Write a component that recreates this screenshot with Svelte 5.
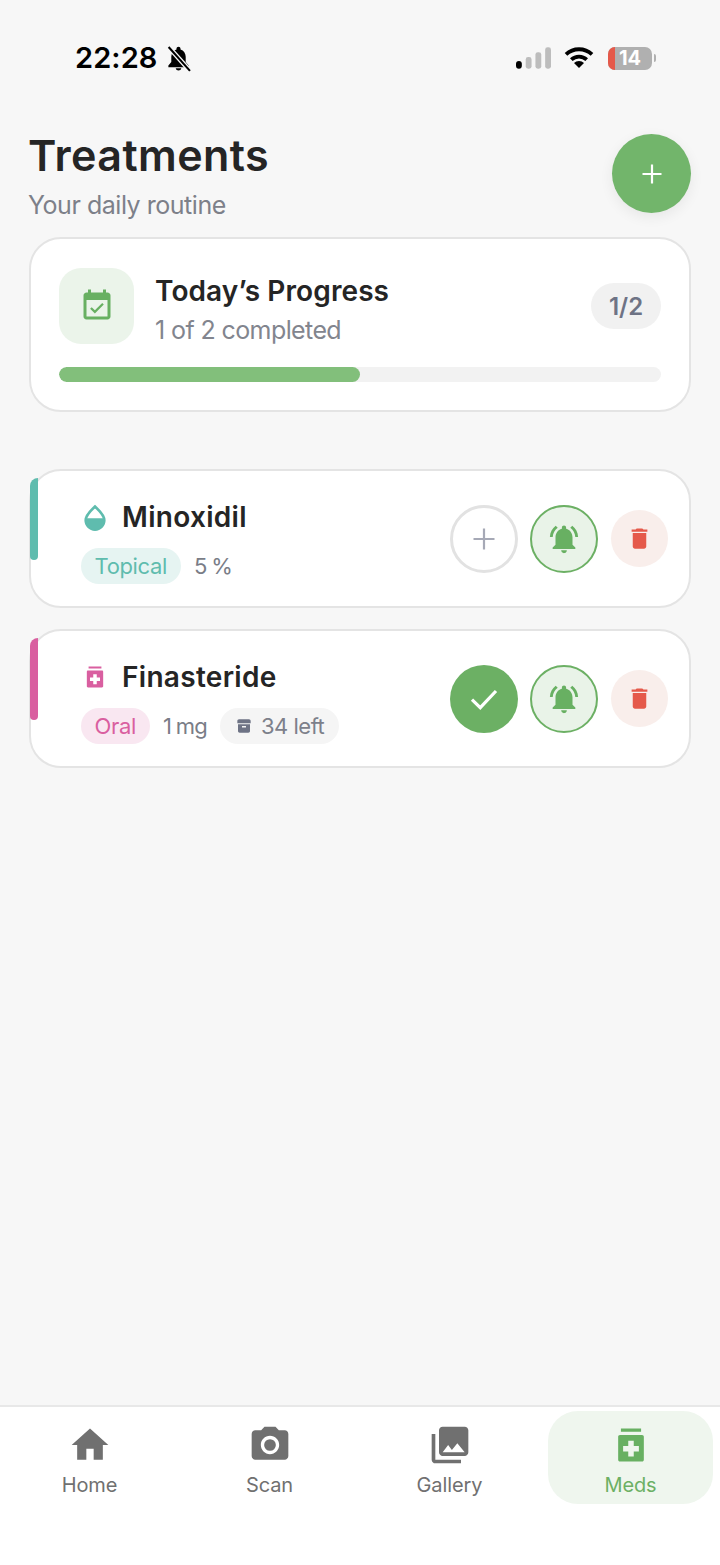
<script>
  const meds = [
    { name: 'Minoxidil', kind: 'drop', tag: 'Topical', tone: 'teal', dose: '5 %', done: false },
    { name: 'Finasteride', kind: 'jar', tag: 'Oral', tone: 'pink', dose: '1 mg', left: '34 left', done: true }
  ];
  const bell = 'M7.58 4.08L6.15 2.65C3.75 4.48 2.17 7.3 2.03 10.5h2c.15-2.65 1.51-4.97 3.55-6.42zm12.39 6.42h2c-.15-3.2-1.73-6.02-4.12-7.85l-1.42 1.43c2.02 1.45 3.39 3.77 3.54 6.42zM18 11c0-3.07-1.64-5.64-4.5-6.32V4c0-.83-.67-1.5-1.5-1.5s-1.5.67-1.5 1.5v.68C7.63 5.36 6 7.92 6 11v5l-2 2v1h16v-1l-2-2v-5zm-6 11c.14 0 .27-.01.4-.04.65-.14 1.18-.58 1.44-1.18.1-.24.15-.5.15-.78h-4c.01 1.1.9 2 2.01 2z';
  const trash = 'M6 19c0 1.1.9 2 2 2h8c1.1 0 2-.9 2-2V7H6v12zM19 4h-3.5l-1-1h-5l-1 1H5v2h14V4z';
  const jar = 'M6.500 3h11v1.800h-11zM6 6.500h12c.6 0 1 .4 1 1V20c0 .6-.4 1-1 1H6c-.6 0-1-.4-1-1V7.500c0-.6.4-1 1-1zm4.500 3.200v2.800H7.700v3h2.800v2.800h3v-2.800h2.800v-3h-2.800V9.700z';
  const tabs = [
    { label: 'Home', d: 'M10 20v-6h4v6h5v-8h3L12 3 2 12h3v8z' },
    { label: 'Scan', d: 'M9 2L7.17 4H4c-1.1 0-2 .9-2 2v12c0 1.1.9 2 2 2h16c1.1 0 2-.9 2-2V6c0-1.1-.9-2-2-2h-3.17L15 2H9zm3 15c-2.76 0-5-2.24-5-5s2.24-5 5-5 5 2.24 5 5-2.24 5-5 5zm0-8.2a3.2 3.2 0 1 0 0 6.4 3.2 3.2 0 0 0 0-6.4z' },
    { label: 'Gallery', d: 'M22 16V4c0-1.1-.9-2-2-2H8c-1.1 0-2 .9-2 2v12c0 1.1.9 2 2 2h12c1.1 0 2-.9 2-2zm-11-4l2.03 2.71L16 11l4 5H8l3-4zM2 6v14c0 1.1.9 2 2 2h14v-2H4V6H2z' },
    { label: 'Meds', d: jar, active: true }
  ];
</script>

<div class="screen">
  <div class="status">
    <div class="status-left">
      <span class="time">22:28</span>
      <svg class="silent" viewBox="0 0 24 24" aria-hidden="true">
        <path d="M12 1.600c-1 0-1.800.8-1.800 1.800v.5C7.300 4.800 5.600 7.300 5.600 10.500v4.700L3 18.300v1.400h18v-1.400l-2.600-3.100v-4.700c0-3.200-1.700-5.700-4.600-6.600v-.5c0-1-.8-1.800-1.800-1.800zM9.500 20.700c.3 1.200 1.300 2 2.500 2s2.200-.8 2.500-2z" fill="#000"/>
        <path d="M3.200 1.800L22.200 23" stroke="#f7f7f7" stroke-width="4.200"/>
        <path d="M3.200 1.800L22.200 23" stroke="#000" stroke-width="1.800"/>
      </svg>
    </div>
    <div class="status-right">
      <svg class="signal" viewBox="0 0 36 22" aria-hidden="true">
        <rect x="0" y="14" width="6" height="8" rx="3" fill="#000"/>
        <rect x="10" y="10" width="6" height="12" rx="2.500" fill="#bdbdbd"/>
        <rect x="20" y="5" width="6" height="17" rx="2.500" fill="#bdbdbd"/>
        <rect x="30" y="0" width="6" height="22" rx="2.500" fill="#bdbdbd"/>
      </svg>
      <svg class="wifi" viewBox="0 0 30 22" aria-hidden="true">
        <path d="M2 8.400a19 19 0 0 1 26 0M7.300 13.600a11.200 11.200 0 0 1 15.400 0" fill="none" stroke="#000" stroke-width="3.800"/>
        <path d="M15 22l-5-5a7 7 0 0 1 10 0z" fill="#000"/>
      </svg>
      <div class="battery">
        <span class="battery-level"></span>
        <span class="battery-num">14</span>
      </div>
      <span class="battery-tip"></span>
    </div>
  </div>

  <main class="main">
    <header class="head">
      <div class="head-text">
        <h1>Treatments</h1>
        <p>Your daily routine</p>
      </div>
      <button class="fab" aria-label="Add">
        <svg viewBox="0 0 24 24"><path d="M12 2.500v19M2.500 12h19" stroke="#fff" stroke-width="2.200"/></svg>
      </button>
    </header>

    <section class="card progress">
      <div class="progress-top">
        <div class="calendar">
          <svg viewBox="0 0 24 24"><path d="M16.530 11.060L15.470 10l-4.880 4.880-2.120-2.120-1.060 1.060L10.590 17l5.940-5.940zM19 3h-1V1h-2v2H8V1H6v2H5c-1.110 0-1.990.9-1.990 2L3 19c0 1.100.89 2 2 2h14c1.100 0 2-.9 2-2V5c0-1.100-.9-2-2-2zm0 16H5V8h14v11z" fill="#68b062"/></svg>
        </div>
        <div class="progress-text">
          <h2>Today’s Progress</h2>
          <p>1 of 2 completed</p>
        </div>
        <span class="count">1/2</span>
      </div>
      <div class="track"><div class="fill" style="width: 50%"></div></div>
    </section>

    <div class="list">
      {#each meds as med}
        <article class="card med">
          <span class="accent {med.tone}"></span>
          <div class="med-info">
            <div class="med-name">
              {#if med.kind === 'drop'}
                <svg class="kind" viewBox="0 0 24 24">
                  <path d="M12 3c3 3 8 6.800 8 11.800a8 8 0 0 1-16 0C4 9.800 9 6 12 3z" fill="none" stroke="#5fbcae" stroke-width="2.200"/>
                  <path d="M4 13h16v1.800a8 8 0 0 1-16 0z" fill="#5fbcae"/>
                </svg>
              {:else}
                <svg class="kind" viewBox="0 0 24 24"><path d={jar} fill="#d95fa0" fill-rule="evenodd"/></svg>
              {/if}
              <h3>{med.name}</h3>
            </div>
            <div class="med-meta">
              <span class="tag {med.tone}">{med.tag}</span>
              <span class="dose">{med.dose}</span>
              {#if med.left}
                <span class="left">
                  <svg viewBox="0 0 24 24"><path d="M2 4.500C2 3.100 3.100 2 4.500 2h15C20.900 2 22 3.100 22 4.500V8H2zM3 9.500h18V19.500c0 1.400-1.100 2.500-2.500 2.500h-13C4.100 22 3 20.900 3 19.500zM9 12v2.200h6V12z" fill="#6e7385" fill-rule="evenodd"/></svg>
                  {med.left}
                </span>
              {/if}
            </div>
          </div>
          <div class="actions">
            {#if med.done}
              <button class="round check" aria-label="Done">
                <svg viewBox="0 0 24 24"><path d="M3 12.500l6.200 6L21 6" fill="none" stroke="#fff" stroke-width="2.400"/></svg>
              </button>
            {:else}
              <button class="round add" aria-label="Log">
                <svg viewBox="0 0 24 24"><path d="M12 1.500v21M1.500 12h21" stroke="#a6a9b6" stroke-width="2.200"/></svg>
              </button>
            {/if}
            <button class="round bell" aria-label="Reminder">
              <svg viewBox="0 0 24 24"><path d={bell} fill="#68b062"/></svg>
            </button>
            <button class="trash" aria-label="Delete">
              <svg viewBox="0 0 24 24"><path d={trash} fill="#e5594a"/></svg>
            </button>
          </div>
        </article>
      {/each}
    </div>
  </main>

  <nav class="nav">
    {#each tabs as tab}
      <div class="tab" class:active={tab.active}>
        <svg viewBox="0 0 24 24"><path d={tab.d} fill-rule="evenodd"/></svg>
        <span>{tab.label}</span>
      </div>
    {/each}
  </nav>
</div>

<style>
  :global(body) { margin: 0; background: #f7f7f7; }
  .screen {
    width: 720px; height: 1565px; display: flex; flex-direction: column;
    background: #f7f7f7; color: #252525; font-family: Inter, "Noto Sans", sans-serif;
    overflow: hidden;
  }
  .status {
    height: 134px; flex: none; box-sizing: border-box; padding: 40px 64px 0 75px;
    display: flex; justify-content: space-between; align-items: flex-start;
  }
  .status-left { display: flex; align-items: center; gap: 7px; height: 36px; }
  .time { font-size: 29px; font-weight: 600; color: #000; letter-spacing: 0.1px; line-height: 36px; }
  .silent { width: 27px; height: 27px; }
  .status-right { display: flex; align-items: center; height: 36px; }
  .signal { width: 35px; height: 22px; margin-right: 13px; }
  .wifi { width: 30px; height: 22px; margin-right: 14px; margin-top: -2px; }
  .battery {
    position: relative; width: 44px; height: 23px; border-radius: 7px; background: #b0b0b0;
    overflow: hidden; display: flex; align-items: center; justify-content: center;
  }
  .battery-level { position: absolute; left: 0; top: 0; bottom: 0; width: 7px; background: #e5594a; }
  .battery-num { position: relative; font-size: 20px; font-weight: 700; color: #fff; line-height: 23px; }
  .battery-tip { width: 2px; height: 8px; margin-left: 2px; background: #b0b0b0; border-radius: 0 2px 2px 0; }

  .main { flex: 1; padding: 0 29px; }
  .head { display: flex; justify-content: space-between; align-items: flex-start; height: 103px; }
  h1 { margin: 0 0 0 -1px; font-size: 43px; font-weight: 600; line-height: 42px; letter-spacing: 0.45px; color: #252525; }
  .head p { margin: 13px 0 0 -1px; font-size: 25px; line-height: 32px; color: #7d8089; font-weight: 400; letter-spacing: -0.47px; }
  .fab {
    width: 79px; height: 79px; border: 0; border-radius: 50%; padding: 0; background: #72b56b;
    display: flex; align-items: center; justify-content: center; box-shadow: 0 4px 14px rgba(0,0,0,.07);
  }
  .fab svg { width: 24px; height: 24px; }

  .card { box-sizing: border-box; background: #fff; border: 2px solid #e4e4e4; border-radius: 32px; }
  .progress { height: 175px; padding: 29px 28px 0; }
  .progress-top { display: flex; align-items: center; height: 76px; }
  .calendar {
    width: 75px; height: 76px; border-radius: 22px; background: #ebf4ea; flex: none;
    display: flex; align-items: center; justify-content: center;
  }
  .calendar svg { width: 36px; height: 36px; }
  .progress-text { flex: 1; margin-left: 21px; padding-top: 6px; }
  h2 { margin: 0; font-size: 28px; font-weight: 600; line-height: 36px; letter-spacing: 0.1px; color: #252525; }
  .progress-text p { margin: 5px 0 0; font-size: 25px; line-height: 32px; letter-spacing: -0.6px; color: #82858e; }
  .count {
    width: 70px; height: 46px; border-radius: 23px; background: #f1f1f1; font-size: 24px; font-weight: 600;
    color: #6e7385; display: flex; align-items: center; justify-content: center;
  }
  .track { height: 15px; margin-top: 23px; border-radius: 8px; background: #f2f2f2; overflow: hidden; }
  .fill { height: 100%; border-radius: 8px; background: #82bf7b; }

  .list { margin-top: 57px; display: flex; flex-direction: column; gap: 21px; }
  .med {
    position: relative; height: 139px; padding: 0 21px 0 50px; display: flex; align-items: center;
    justify-content: space-between;
  }
  .accent { position: absolute; left: -1px; top: 7px; width: 8px; height: 82px; border-radius: 8px 0 4px 4px; }
  .accent.teal { background: #5fbcae; }
  .accent.pink { background: #d95fa0; }
  .med-info { display: flex; flex-direction: column; gap: 13px; padding-top: 5px; }
  .med-name { display: flex; align-items: center; gap: 13px; height: 36px; padding-left: 1px; }
  .kind { width: 28px; height: 28px; flex: none; margin-left: -1px; }
  h3 { margin: 0; font-size: 28px; font-weight: 600; line-height: 36px; letter-spacing: 0.3px; color: #252525; }
  .med-meta { display: flex; align-items: center; gap: 13px; }
  .tag { height: 36px; padding: 0 14px 0 13.5px; border-radius: 18px; font-size: 22px; line-height: 36px; letter-spacing: -0.35px; }
  .tag.teal { background: #e6f4f2; color: #5fbcae; }
  .tag.pink { background: #f9e7f1; color: #d95fa0; }
  .dose { font-size: 22px; color: #7a7d87; line-height: 36px; letter-spacing: -0.7px; word-spacing: -1px; }
  .left {
    height: 36px; padding: 0 15px 0 16px; border-radius: 18px; background: #f5f5f5; color: #7d808a; font-size: 22px;
    line-height: 36px; display: flex; align-items: center; gap: 9px; letter-spacing: -0.5px;
  }
  .left svg { width: 16px; height: 16px; flex: none; }
  .actions { display: flex; align-items: center; gap: 12px; }
  button { cursor: pointer; }
  .round {
    box-sizing: border-box; width: 68px; height: 68px; border-radius: 50%; padding: 0; background: none;
    display: flex; align-items: center; justify-content: center;
  }
  .add { border: 3px solid #e2e2e2; background: #fff; }
  .add svg { width: 24px; height: 24px; }
  .check { border: 0; background: #6cb064; }
  .check svg { width: 32px; height: 32px; }
  .bell { border: 2px solid #6cb064; background: #e9f3e8; margin-right: 1px; }
  .bell svg { width: 34px; height: 34px; }
  .trash {
    width: 57px; height: 57px; border: 0; border-radius: 50%; padding: 0; background: #f9eeeb;
    display: flex; align-items: center; justify-content: center;
  }
  .trash svg { width: 27px; height: 27px; }

  .nav {
    height: 160px; flex: none; box-sizing: border-box; background: #fff; border-top: 2px solid #e8e8e8;
    padding: 4px 0 0; display: grid; grid-template-columns: repeat(4, 1fr); align-items: start;
  }
  .tab {
    height: 93px; border-radius: 30px; display: flex; flex-direction: column; align-items: center;
    color: #707070; padding-top: 12px; box-sizing: border-box; margin: 0 8px 0 7px;
  }
  .tab svg { width: 44px; height: 44px; fill: #707070; }
  .tab span { margin-top: 5px; font-size: 20px; line-height: 26px; letter-spacing: -0.1px; }
  .tab.active { background: #eff6ee; color: #6cb064; margin: 0 7px 0 8px; }
  .tab.active svg { fill: #68b062; }
</style>
